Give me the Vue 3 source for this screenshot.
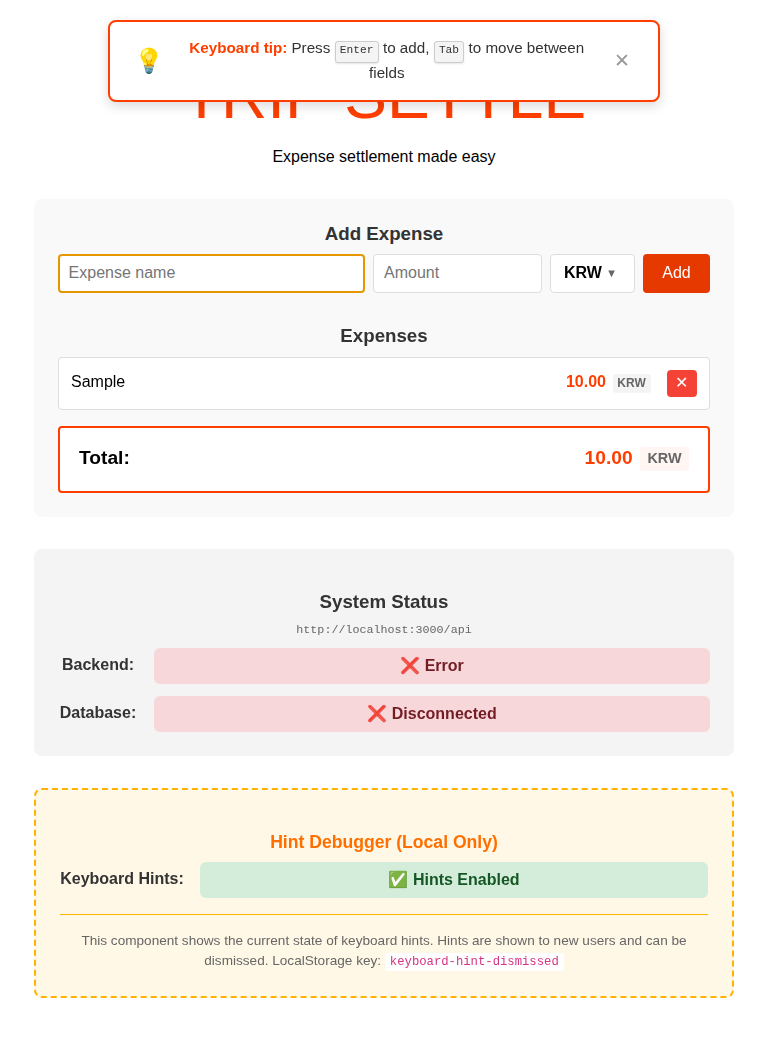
<script setup>
import { ref, onMounted } from 'vue'

const nameInput = ref(null)
const hintVisible = ref(true)
const expenses = ref([{ name: 'Sample', amount: '10.00', currency: 'KRW' }])
const statuses = [
  { label: 'Backend:', text: '❌ Error' },
  { label: 'Database:', text: '❌ Disconnected' },
]

onMounted(() => nameInput.value?.focus())
</script>

<template>
  <div v-if="hintVisible" class="toast">
    <span class="bulb">💡</span>
    <p class="tip">
      <strong>Keyboard tip:</strong> Press <kbd>Enter</kbd> to add, <kbd>Tab</kbd> to move between fields
    </p>
    <button class="close" @click="hintVisible = false">✕</button>
  </div>

  <main class="page">
    <h1>Trip Settle</h1>
    <p class="lead">Expense settlement made easy</p>

    <section class="card expenses">
      <h2>Add Expense</h2>
      <div class="form">
        <input ref="nameInput" class="name" placeholder="Expense name" />
        <input class="amount" placeholder="Amount" />
        <button class="currency">KRW <span class="arrow">▼</span></button>
        <button class="add">Add</button>
      </div>
      <h2 class="list-title">Expenses</h2>
      <div v-for="(e, i) in expenses" :key="i" class="item">
        <span class="item-name">{{ e.name }}</span>
        <span class="item-amount">{{ e.amount }}</span>
        <span class="chip">{{ e.currency }}</span>
        <button class="remove">✕</button>
      </div>
      <div class="total">
        <span class="total-label">Total:</span>
        <span class="total-amount">10.00</span>
        <span class="total-chip">KRW</span>
      </div>
    </section>

    <section class="card status">
      <h2>System Status</h2>
      <p class="url">http://localhost:3000/api</p>
      <div v-for="s in statuses" :key="s.label" class="row">
        <span class="label">{{ s.label }}</span>
        <span class="pill error">{{ s.text }}</span>
      </div>
    </section>

    <section class="card debug">
      <h2>Hint Debugger (Local Only)</h2>
      <div class="row">
        <span class="label">Keyboard Hints:</span>
        <span class="pill ok">✅ Hints Enabled</span>
      </div>
      <p class="note">
        This component shows the current state of keyboard hints. Hints are shown to new users and can be
        dismissed. LocalStorage key: <code>keyboard-hint-dismissed</code>
      </p>
    </section>
  </main>
</template>

<style>
body {
  margin: 0;
  background: #fff;
}
</style>

<style scoped>
.page,
.toast,
.page input,
.page button,
.toast button {
  font-family: "Liberation Sans", Arial, sans-serif;
}
.page {
  width: 700px;
  height: 1046px;
  margin: 0 auto;
  font-size: 16px;
  text-align: center;
  overflow: hidden;
  color: #000;
}
.page *,
.toast,
.toast * {
  box-sizing: border-box;
}
h1 {
  margin: 59px 0 0;
  height: 74px;
  font-size: 64px;
  line-height: 74px;
  font-weight: 100;
  color: #ff3e00;
  text-transform: uppercase;
}
.lead {
  margin: 14px 0 0;
  height: 20px;
  line-height: 20px;
}
.toast {
  position: fixed;
  z-index: 10;
  top: 20px;
  left: 108px;
  width: 552px;
  height: 82px;
  padding: 0 24px;
  display: flex;
  align-items: center;
  background: #fff;
  border: 2px solid #ff3e00;
  border-radius: 8px;
  box-shadow: 0 4px 12px rgba(0, 0, 0, 0.15);
}
.bulb {
  width: 30px;
  font-size: 24px;
  line-height: 28px;
  text-align: center;
}
.tip {
  flex: 1;
  margin: 0 18px 0 17.6px;
  padding-bottom: 2px;
  font-size: 15.2px;
  line-height: 25px;
  color: #333;
  text-align: center;
}
.tip strong {
  color: #ff3e00;
}
kbd {
  display: inline-block;
  height: 22px;
  margin: -4px 0;
  padding: 0 4.3px;
  font-family: "Liberation Mono", monospace;
  font-size: 11.2px;
  line-height: 17px;
  background: #f4f4f4;
  border: 1px solid #ccc;
  border-radius: 3px;
  box-shadow: 0 1px 2px rgba(0, 0, 0, 0.1);
}
.close {
  width: 24px;
  padding: 0 1px 1px 0;
  border: 0;
  background: none;
  color: #999;
  font-size: 19.2px;
  line-height: 24px;
}
.card {
  border-radius: 8px;
  padding: 24px;
}
.card h2 {
  margin: 0;
  font-size: 18.72px;
  line-height: 22px;
  color: #333;
}
.expenses {
  margin-top: 32px;
  height: 318px;
  background: #f9f9f9;
}
.form {
  display: flex;
  gap: 8px;
  height: 39px;
  margin-top: 9px;
}
.form input,
.form button {
  height: 39px;
  margin: 0;
  font-size: 16px;
  border: 1px solid #ddd;
  border-radius: 4px;
  background: #fff;
}
.form input {
  min-width: 0;
  padding: 0 10px 2px;
  outline: none;
}
.form .name {
  flex: 1;
  padding: 0 9px 2px 8.6px;
  border: 2px solid #e59700;
}
.form .amount {
  width: 169px;
}
.form .currency {
  display: flex;
  align-items: center;
  justify-content: center;
  gap: 4px;
  width: 85px;
  padding: 0 4px 2px 0;
  font-weight: bold;
  color: #000;
}
.arrow {
  font-size: 11.2px;
  font-weight: normal;
  color: #666;
}
.form .add {
  width: 67px;
  padding: 0 0 2px;
  border: 0;
  color: #fff;
  background: #e63900;
}
.card .list-title {
  margin: 32px 0 10px;
}
.item {
  display: flex;
  align-items: center;
  height: 53px;
  padding: 0 12px;
  background: #fff;
  border: 1px solid #ddd;
  border-radius: 4px;
}
.item-name,
.total-label {
  flex: 1;
  text-align: left;
}
.item-name,
.item-amount {
  padding-bottom: 3px;
}
.item-amount {
  font-weight: bold;
  color: #ff3e00;
}
.chip {
  width: 38px;
  height: 19px;
  margin: 0 16px 0 7px;
  padding-right: 1px;
  font-size: 12px;
  line-height: 19px;
  font-weight: bold;
  color: #666;
  background: #f4f4f4;
  border-radius: 3px;
}
.remove {
  width: 30px;
  height: 27px;
  padding: 0 1px 2px 0;
  border: 0;
  border-radius: 4px;
  font-size: 16px;
  color: #fff;
  background: #f44336;
}
.total {
  display: flex;
  align-items: center;
  height: 67px;
  margin-top: 16px;
  padding: 0 19px;
  font-size: 19.2px;
  font-weight: bold;
  background: #fff;
  border: 2px solid #ff3e00;
  border-radius: 4px;
}
.total-label,
.total-amount {
  padding-bottom: 3px;
}
.total-amount {
  color: #ff3e00;
}
.total-chip {
  width: 49px;
  height: 24px;
  margin: 0 0 2px 7.4px;
  font-size: 14.4px;
  line-height: 23px;
  color: #666;
  background: #fff5f2;
  border-radius: 3px;
}
.status {
  margin-top: 32px;
  height: 207px;
  padding-top: 42px;
  background: #f4f4f4;
}
.url {
  margin: 10px 0 10px;
  font-family: "Liberation Mono", monospace;
  font-size: 11.7px;
  line-height: 15px;
  color: #666;
}
.row {
  display: flex;
  gap: 16px;
  height: 36px;
  margin-bottom: 12px;
}
.label {
  width: 80px;
  font-weight: bold;
  line-height: 34px;
  color: #333;
}
.pill {
  flex: 1;
  line-height: 36px;
  font-weight: bold;
  border-radius: 6px;
}
.error {
  color: #721c24;
  background: #f8d7da;
}
.ok {
  color: #155724;
  background: #d4edda;
}
.debug {
  margin-top: 32px;
  height: 210px;
  padding-top: 41px;
  background: #fff8e6;
  border: 2px dashed #ffb300;
}
.debug h2 {
  font-size: 17.6px;
  color: #ff6f00;
}
.debug .row {
  margin: 9px 0 16px;
}
.debug .label {
  width: 124px;
}
.note {
  margin: 0;
  padding-top: 16px;
  border-top: 1px solid #ffb300;
  font-size: 13.6px;
  line-height: 20.4px;
  color: #666;
}
code {
  padding: 2px 5px;
  font-family: "Liberation Mono", monospace;
  font-size: 12.24px;
  color: #d63384;
  background: #fff;
  border-radius: 3px;
}
</style>
